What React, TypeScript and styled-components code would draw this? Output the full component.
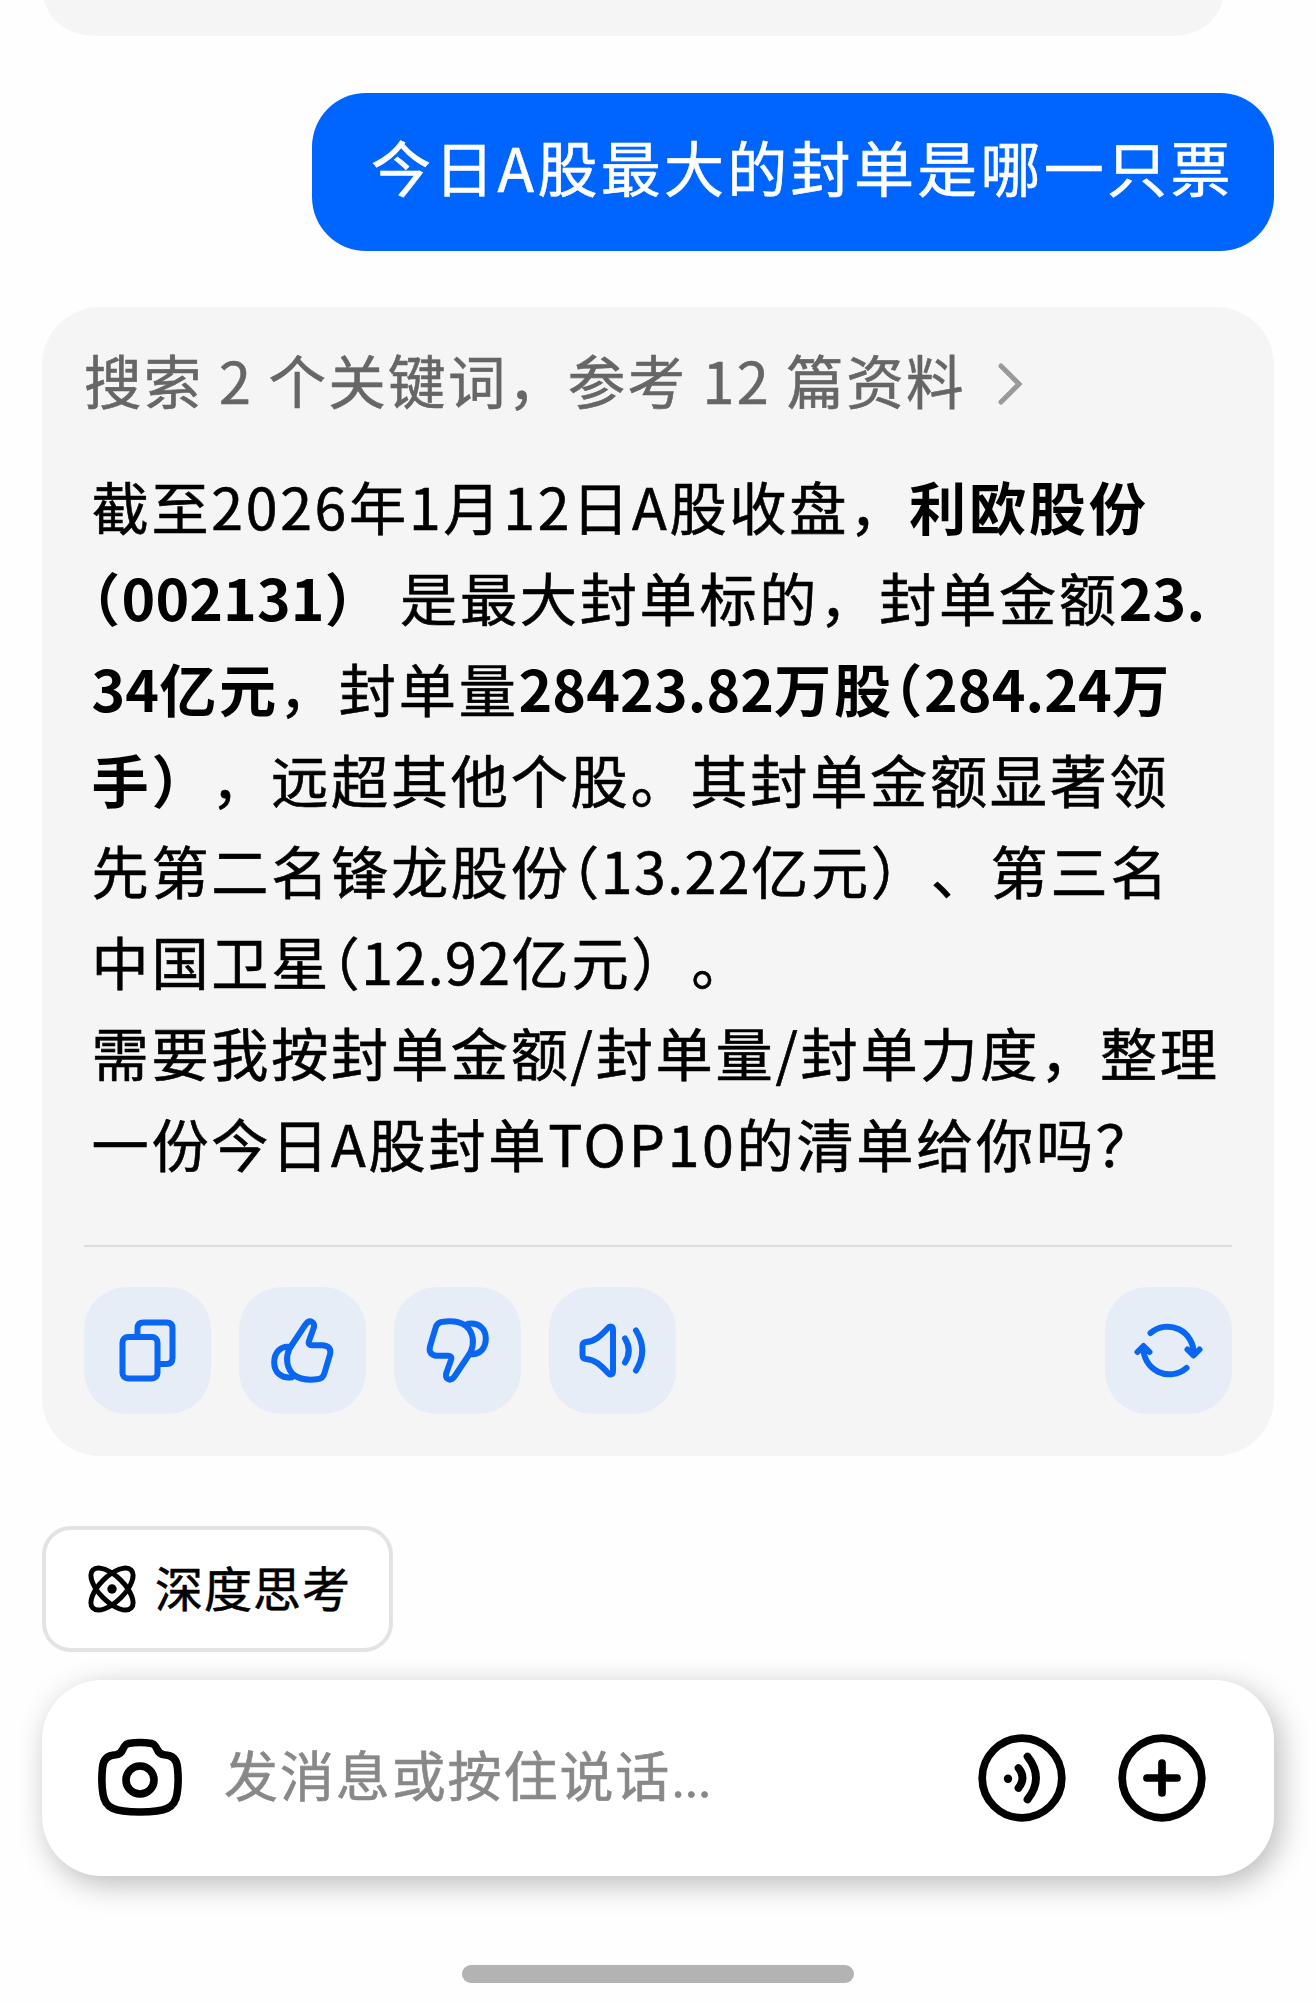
import React from "react";
import styled, { createGlobalStyle } from "styled-components";

const BLUE = "#0866f2";

const GlobalStyle = createGlobalStyle`
  * { box-sizing: border-box; }
  body { margin: 0; background: #fefefe; }
`;

const Screen = styled.main`
  width: 1316px;
  height: 2003px;
  padding: 0 42px;
  display: flex;
  flex-direction: column;
  overflow: hidden;
  background: #fefefe;
  color: #000;
  font-family: "Noto Sans CJK SC", "Noto Sans", sans-serif;
  text-spacing-trim: space-all;
  white-space: nowrap;
  -webkit-text-stroke-width: 0.6px;
`;

const PreviousBubble = styled.div`
  flex: none;
  width: 1183px;
  height: 36px;
  background: #f5f5f5;
  clip-path: path("M2 0 C8 22 26 36 56 36 H1127 C1157 36 1175 22 1181 0 Z");
`;

const UserBubble = styled.div`
  flex: none;
  align-self: flex-end;
  width: 962px;
  height: 158px;
  margin-top: 56.5px;
  padding: 0 0 11px 59px;
  display: flex;
  align-items: center;
  border-radius: 54px;
  background: #0065ff;
  color: #fff;
  font-size: 60px;
  line-height: 90px;
  letter-spacing: 3.3px;
`;

const AnswerCard = styled.section`
  flex: none;
  height: 1149px;
  margin-top: 56.5px;
  padding: 0 42px;
  display: flex;
  flex-direction: column;
  border-radius: 58px;
  background: #f5f5f5;
`;

const SourceRow = styled.div`
  height: 90px;
  margin-top: 27px;
  display: flex;
  align-items: center;
  gap: 31px;
  color: #666;
  font-size: 57.5px;
  line-height: 90px;
  letter-spacing: 2.35px;

  svg {
    margin-top: 10px;
  }
`;

const Answer = styled.div`
  margin-top: 35.5px;
  padding-left: 7.5px;
  font-size: 57.2px;
  letter-spacing: 2.7px;
`;

const Line = styled.p`
  margin: 0;
  height: 91px;
  line-height: 91px;
`;

const Strong = styled.strong`
  font-weight: 700;
  -webkit-text-stroke-width: 0;
`;

const StrongNumber = styled.span`
  letter-spacing: 0.1px;
`;

const Amount = styled.span`
  letter-spacing: 1.5px;
`;

const Half = styled.span`
  font-feature-settings: "halt" 1;
  letter-spacing: 1.5px;
`;

const Divider = styled.hr`
  width: 100%;
  height: 2px;
  margin: 57.5px 0 0;
  border: 0;
  background: #dddddd;
`;

const Actions = styled.div`
  margin-top: 40px;
  display: flex;
  gap: 28px;
`;

const ActionButton = styled.button<{ $end?: boolean }>`
  width: 127px;
  height: 127px;
  margin: 0 0 0 ${(p) => (p.$end ? "auto" : "0")};
  padding: 0;
  border: 0;
  border-radius: 43px;
  background: #e6edf7;
  color: ${BLUE};
  svg { display: block; }
`;

const Chip = styled.button`
  flex: none;
  align-self: flex-start;
  width: 351px;
  height: 126px;
  margin: 70px 0 0;
  padding: 0 0 0 41px;
  display: flex;
  align-items: center;
  gap: 18px;
  border: 4px solid #e3e3e3;
  border-radius: 29px;
  background: #fff;
  color: #000;
  font: 400 48px/72px "Noto Sans CJK SC", sans-serif;
  letter-spacing: 1px;
`;

const ChipLabel = styled.span`
  padding-bottom: 7px;
  -webkit-text-stroke-width: 0.6px;
`;

const Composer = styled.div`
  flex: none;
  height: 196px;
  margin-top: 28px;
  padding: 0 68px 0 52px;
  display: flex;
  align-items: center;
  border-radius: 60px;
  background: #fff;
  box-shadow: 6px 8px 30px rgba(0, 0, 0, 0.27);
`;

const Placeholder = styled.span`
  flex: 1;
  margin-left: 38px;
  padding-bottom: 3px;
  color: #888;
  font-size: 54px;
  line-height: 80px;
  letter-spacing: 1.9px;
`;

const Dots = styled.span`
  font-family: Roboto, sans-serif;
  letter-spacing: -1px;
`;

const RoundIcons = styled.div`
  display: flex;
  gap: 52px;
`;

const HomeBar = styled.div`
  flex: none;
  align-self: center;
  width: 392px;
  height: 18px;
  margin-top: 89px;
  border-radius: 9px;
  background: #b3b3b3;
`;

const stroke = {
  fill: "none",
  stroke: "currentColor",
  strokeWidth: 6,
  strokeLinecap: "round" as const,
  strokeLinejoin: "round" as const,
};

const CopyIcon = () => (
  <svg width="127" height="127" viewBox="0 0 127 127" {...stroke}>
    <rect x="38.5" y="50" width="35" height="41.5" rx="5.5" />
    <path d="M53.5 49V41.5Q53.5 35.5 59.5 35.5H82.5Q88.5 35.5 88.5 41.5V71Q88.5 77 82.5 77H75" />
  </svg>
);

const thumb =
  "M50.5 61.5L66.5 37.5C71 31.5 77 35.5 74.5 41.5L70 54C69 57 70.5 58.2 73 58.2H83C89.5 58.2 92.5 62 91 67.5L85.5 86C84.5 90 82 92 78 92.3C70 93.2 61 92.5 55 88C47 81 46.5 70 50.5 61.5Z";
const thumbBack = "M51.5 60C41 58.5 35.2 66 35.2 75.5C35.2 85 42 92 53 90.2";

const LikeIcon = () => (
  <svg width="127" height="127" viewBox="0 0 127 127" {...stroke}>
    <path d={thumb} />
    <path d={thumbBack} />
  </svg>
);

const DislikeIcon = () => (
  <svg width="127" height="127" viewBox="0 0 127 127" {...stroke}>
    <g transform="rotate(180 63.5 63.5)">
      <path d={thumb} />
      <path d={thumbBack} />
    </g>
  </svg>
);

const SpeakerIcon = () => (
  <svg width="127" height="127" viewBox="0 0 127 127" {...stroke}>
    <path d="M33.5 59Q33.5 55.5 37 55C46 54.5 52 48.5 58.5 41.5C61 38.5 64 39 64 43V84C64 88 61 88.5 58.5 85.5C52 78.5 46 72.5 37 72Q33.5 71.5 33.5 68Z" />
    <path d="M76 51.5Q83.5 63.5 76 75.5M87 43.5Q99.5 63.5 87 83.5" />
  </svg>
);

const RefreshIcon = () => (
  <svg width="127" height="127" viewBox="0 0 127 127" {...stroke}>
    <path d="M45.5 46A26 26 0 0 1 88.5 67M82.5 62.5L88.5 68.5L94.5 62.5" />
    <path d="M81.5 81A26 26 0 0 1 38.5 60M32.5 65L38.5 59L44.5 65" />
  </svg>
);

const ChevronIcon = () => (
  <svg width="28" height="46" viewBox="0 0 28 46" fill="none" stroke="#999" strokeWidth="5" strokeLinecap="round">
    <path d="M4 5L22 23L4 41" />
  </svg>
);

const AtomIcon = () => (
  <svg width="50" height="50" viewBox="0 0 50 50" fill="none" stroke="#000" strokeWidth="5">
    <ellipse cx="25" cy="25" rx="27" ry="12.5" transform="rotate(45 25 25)" />
    <ellipse cx="25" cy="25" rx="27" ry="12.5" transform="rotate(-45 25 25)" />
    <circle cx="25" cy="25" r="4.7" fill="#000" stroke="none" />
  </svg>
);

const CameraIcon = () => (
  <svg width="92" height="86" viewBox="0 0 92 86" fill="none" stroke="#000" strokeWidth="7.6" strokeLinejoin="round">
    <path d="M34 8.5Q46 6.5 58 8.5Q61 9.5 63 14Q65 19 70 19.7C79 20 83 25 83.5 33Q85 47 83 59C81 73 72 77 46 77C20 77 11 73 9 59Q7 47 8.5 33C9 25 13 20 22 19.7Q27 19 29 14Q31 9.5 34 8.5Z" />
    <circle cx="46" cy="45" r="14" />
  </svg>
);

const VoiceIcon = () => (
  <svg width="88" height="88" viewBox="0 0 88 88" fill="none" stroke="#000" strokeWidth="7.7" strokeLinecap="round">
    <circle cx="44" cy="44" r="39.8" />
    <circle cx="30" cy="44.7" r="4.2" fill="#000" stroke="none" />
    <path d="M40.5 34Q48.5 44 40.5 54M49.5 22.5Q66.5 44 49.5 65.5" />
  </svg>
);

const PlusIcon = () => (
  <svg width="88" height="88" viewBox="0 0 88 88" fill="none" stroke="#000" strokeWidth="7.7" strokeLinecap="round">
    <circle cx="44" cy="44" r="39.8" />
    <path d="M29 44H59M44 29V59" />
  </svg>
);

export default function App() {
  return (
    <>
      <GlobalStyle />
      <Screen>
        <PreviousBubble />
        <UserBubble>今日A股最大的封单是哪一只票</UserBubble>
        <AnswerCard>
          <SourceRow>
            <span>搜索 2 个关键词，参考 12 篇资料</span>
            <ChevronIcon />
          </SourceRow>
          <Answer>
            <Line>截至2026年1月12日A股收盘，<Strong>利欧股份</Strong></Line>
            <Line>
              <Strong><Half>（</Half><StrongNumber>002131</StrongNumber>）</Strong> 是最大封单标的，封单金额<Strong><StrongNumber>23.</StrongNumber></Strong>
            </Line>
            <Line>
              <Strong><StrongNumber>34</StrongNumber>亿元</Strong>，封单量<Strong><StrongNumber>28423.82</StrongNumber>万股<Half>（</Half><StrongNumber>284.24</StrongNumber>万</Strong>
            </Line>
            <Line><Strong>手）</Strong>，远超其他个股。其封单金额显著领</Line>
            <Line>先第二名锋龙股份<Half>（</Half><Amount>13.22</Amount>亿元）、第三名</Line>
            <Line>中国卫星<Half>（</Half><Amount>12.92</Amount>亿元）。</Line>
            <Line>需要我按封单金额/封单量/封单力度，整理</Line>
            <Line>一份今日A股封单TOP10的清单给你吗？</Line>
          </Answer>
          <Divider />
          <Actions>
            <ActionButton aria-label="复制"><CopyIcon /></ActionButton>
            <ActionButton aria-label="赞"><LikeIcon /></ActionButton>
            <ActionButton aria-label="踩"><DislikeIcon /></ActionButton>
            <ActionButton aria-label="朗读"><SpeakerIcon /></ActionButton>
            <ActionButton $end aria-label="重新生成"><RefreshIcon /></ActionButton>
          </Actions>
        </AnswerCard>
        <Chip>
          <AtomIcon />
          <ChipLabel>深度思考</ChipLabel>
        </Chip>
        <Composer>
          <CameraIcon />
          <Placeholder>发消息或按住说话<Dots>...</Dots></Placeholder>
          <RoundIcons>
            <VoiceIcon />
            <PlusIcon />
          </RoundIcons>
        </Composer>
        <HomeBar />
      </Screen>
    </>
  );
}
